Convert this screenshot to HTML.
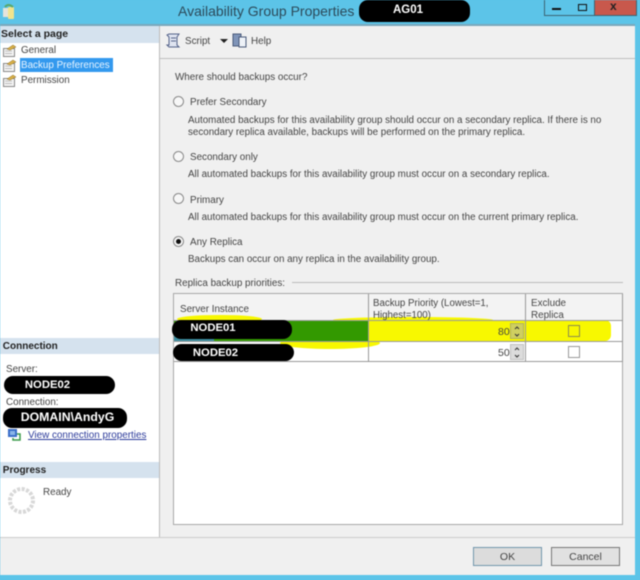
<!DOCTYPE html>
<html><head><meta charset="utf-8"><style>
html,body{margin:0;padding:0;background:#5cc4e8}
#p{position:relative;width:640px;height:580px;overflow:hidden;background:#5cc4e8;font-family:"Liberation Sans",sans-serif;font-size:9.85px;color:#444;filter:blur(.4px)}
#p div{position:absolute;white-space:nowrap}
.t{line-height:12px;margin-top:1px}
.d{font-size:9.8px}
.h{background:#d5e2ee;font-weight:bold;color:#222;left:0;width:159px;height:16px;line-height:16px;font-size:10px}
.bl{background:#000;color:#fff;font-weight:bold;text-align:center;border-radius:9px}
.r{width:11px;height:11px;border:1px solid #8a8a8a;border-radius:50%;background:#f7f7f7;left:173px;box-sizing:border-box}
</style></head><body><div id="p">
<div style="left:0;top:25px;width:635px;height:550px;background:#f0f0f0"></div>
<div style="left:0;top:24px;width:635px;height:2px;background:#7aa8bc"></div>
<!-- titlebar -->
<svg style="position:absolute;left:2px;top:3px" width="14" height="16" viewBox="0 0 14 16"><rect x="1" y="5" width="6" height="9" fill="#e4e4dc"/><rect x="6" y="4" width="6" height="12" rx="1" fill="#f2e48c"/><path d="M3 4q3-4 8 0" stroke="#5aa86a" stroke-width="2" fill="none"/></svg>
<div class="t" style="left:178px;top:2px;font-size:14px;line-height:17px;color:#2c4a5a">Availability Group Properties</div>
<div style="left:359px;top:0;width:111px;height:22px;background:#000;border-radius:9px"></div>
<div class="t" style="left:393px;top:3px;font-size:11.5px;font-weight:bold;color:#fff">AG01</div>
<div style="left:544px;top:0;width:27px;height:16px;background:#5cc4e8;border:1px solid #3b6474;border-top:0;box-sizing:border-box"></div>
<div style="left:570px;top:0;width:25px;height:16px;background:#5cc4e8;border:1px solid #3b6474;border-top:0;border-left:0;box-sizing:border-box"></div>
<div style="left:595px;top:0;width:42px;height:16px;background:#c8584c;border:1px solid #3b6474;border-top:0;border-left:0;box-sizing:border-box"></div>
<div style="left:552px;top:8px;width:9px;height:2px;background:#111"></div>
<div style="left:578px;top:4px;width:9px;height:7px;border:1.5px solid #111;box-sizing:border-box"></div>
<div style="left:610px;top:0;font-size:12px;line-height:13px;font-weight:bold;color:#222">x</div>
<!-- left panel -->
<div style="left:0;top:26px;width:159px;height:511px;background:#fff"></div>
<div style="left:159px;top:26px;width:1px;height:511px;background:#bbb"></div>
<div style="left:0;top:537px;width:635px;height:1px;background:#ccc"></div>
<div class="h" style="top:26px;height:17px;line-height:16px;font-size:10.5px;padding-left:1px;width:158px">Select a page</div>
<svg style="position:absolute;left:2px;top:43px" width="16" height="44" viewBox="0 0 16 44"><path d="M1.500 5.500h11v8h-11z" fill="#f4f4f4" stroke="#888"/><path d="M3 8h7M3 10.500h7" stroke="#bbb"/><path d="M5 6l6-4 3 2-6 3z" fill="#d8b048" stroke="#8a6a20" stroke-width=".5"/><path d="M1.500 20.500h11v8h-11z" fill="#f4f4f4" stroke="#888"/><path d="M3 23h7M3 25.500h7" stroke="#bbb"/><path d="M5 21l6-4 3 2-6 3z" fill="#d8b048" stroke="#8a6a20" stroke-width=".5"/><path d="M1.500 35.500h11v8h-11z" fill="#f4f4f4" stroke="#888"/><path d="M3 38h7M3 40.500h7" stroke="#bbb"/><path d="M5 36l6-4 3 2-6 3z" fill="#d8b048" stroke="#8a6a20" stroke-width=".5"/></svg>
<div class="t" style="left:21px;top:44px">General</div>
<div style="left:20px;top:58px;width:93px;height:14px;line-height:15px;background:#3399ee;color:#e8f4ff;padding-left:1px;box-sizing:border-box">Backup Preferences</div>
<div class="t" style="left:21px;top:74px">Permission</div>
<div class="h" style="top:338px;line-height:17px">&nbsp;Connection</div>
<div class="t" style="left:6px;top:363px">Server:</div>
<div class="bl" style="left:4px;top:376px;width:111px;height:18px;line-height:18px;font-size:11.3px;text-indent:-24px">NODE02</div>
<div class="t" style="left:6px;top:396px">Connection:</div>
<div class="bl" style="left:3px;top:408px;width:124px;height:20px;line-height:19px;font-size:12.3px;text-indent:5px">DOMAIN\AndyG</div>
<svg style="position:absolute;left:7px;top:428px" width="15" height="14" viewBox="0 0 15 14"><rect x="1" y="1" width="9" height="8" fill="#3a6ec8"/><rect x="3" y="3" width="5" height="4" fill="#8ab4e8"/><path d="M10 6h3v6H6v-2" fill="none" stroke="#3a9a4a" stroke-width="1.500"/></svg>
<div class="t" style="left:28px;top:429px;color:#2b3a9a;text-decoration:underline;font-size:9.9px">View connection properties</div>
<div class="h" style="top:462px;line-height:17px">&nbsp;Progress</div>
<svg style="position:absolute;left:7px;top:486px" width="29" height="29" viewBox="0 0 29 29"><circle cx="14.5" cy="14.5" r="11.5" fill="none" stroke="#d8d8d8" stroke-width="4" stroke-dasharray="3 1.5"/></svg>
<div class="t" style="left:43px;top:486px">Ready</div>
<!-- toolbar -->
<div style="left:160px;top:58px;width:475px;height:1px;background:#bfbfbf"></div>
<svg style="position:absolute;left:166px;top:32px" width="16" height="17" viewBox="0 0 16 17"><path d="M3 2h10l-2 3v8l2 2H3l-2-2h2V5L1 3z" fill="#dfe4f0" stroke="#55638a"/><path d="M5 6h5M5 9h5" stroke="#55638a"/></svg>
<div class="t" style="left:185px;top:35px">Script</div>
<div style="left:220px;top:39px;width:0;height:0;border:4px solid transparent;border-top:4px solid #222;border-bottom:0"></div>
<svg style="position:absolute;left:232px;top:33px" width="16" height="15" viewBox="0 0 16 15"><rect x="1" y="1" width="8" height="12" fill="#7f94b8" stroke="#4a5a7a"/><rect x="7" y="4" width="7" height="10" fill="#eef2f8" stroke="#4a5a7a"/></svg>
<div class="t" style="left:251px;top:35px">Help</div>
<!-- content -->
<div class="t" style="left:175px;top:71px">Where should backups occur?</div>
<div class="r" style="top:96px"></div>
<div class="t" style="left:190px;top:96px">Prefer Secondary</div>
<div class="t d" style="left:188px;top:114px">Automated backups for this availability group should occur on a secondary replica. If there is no</div>
<div class="t d" style="left:188px;top:126px">secondary replica available, backups will be performed on the primary replica.</div>
<div class="r" style="top:151px"></div>
<div class="t" style="left:190px;top:151px">Secondary only</div>
<div class="t d" style="left:188px;top:168px">All automated backups for this availability group must occur on a secondary replica.</div>
<div class="r" style="top:193px"></div>
<div class="t" style="left:190px;top:194px">Primary</div>
<div class="t d" style="left:188px;top:211px">All automated backups for this availability group must occur on the current primary replica.</div>
<div class="r" style="top:236px"></div>
<div style="left:176px;top:239px;width:5px;height:5px;border-radius:50%;background:#111"></div>
<div class="t" style="left:190px;top:236px">Any Replica</div>
<div class="t d" style="left:188px;top:253px">Backups can occur on any replica in the availability group.</div>
<div class="t" style="left:175px;top:277px">Replica backup priorities:</div>
<div style="left:292px;top:282px;width:331px;height:1px;background:#bbb"></div>
<!-- table -->
<div style="left:173px;top:293px;width:450px;height:232px;background:#fff;border:1px solid #a8a8a8;box-sizing:border-box"></div>
<div style="left:174px;top:294px;width:448px;height:27px;background:#f3f3f3"></div>
<div style="left:174px;top:361px;width:448px;height:1px;background:#999"></div>
<!-- yellow highlight -->
<div style="left:177px;top:315px;width:85px;height:8px;background:#f8f800;border-radius:50%"></div>
<div style="left:333px;top:317px;width:160px;height:6px;background:#f8f800;border-radius:50%"></div>
<div style="left:280px;top:337px;width:100px;height:12px;background:#f8f800;border-radius:50%"></div>
<div style="left:180px;top:320px;width:431px;height:21px;background:#f8f800;border-radius:0 6px 6px 0"></div>
<div style="left:174px;top:321px;width:194px;height:20px;background:#339900"></div>
<div style="left:174px;top:336px;width:40px;height:5px;background:#3d8ea0"></div>
<div style="left:174px;top:320px;width:448px;height:1px;background:#999"></div>
<div style="left:174px;top:341px;width:448px;height:1px;background:#999"></div>
<div style="left:368px;top:294px;width:1px;height:68px;background:#999"></div>
<div style="left:525px;top:294px;width:1px;height:68px;background:#999"></div>
<div style="left:622px;top:294px;width:1px;height:68px;background:#999"></div>
<div class="t" style="left:180px;top:303px">Server Instance</div>
<div class="t" style="left:373px;top:297px;font-size:9.7px">Backup Priority (Lowest=1,</div>
<div class="t" style="left:373px;top:309px;font-size:9.7px">Highest=100)</div>
<div class="t" style="left:531px;top:297px">Exclude</div>
<div class="t" style="left:531px;top:309px">Replica</div>
<div class="bl" style="left:172px;top:320px;width:120px;height:19px;line-height:16px;font-size:11.3px;text-indent:-38px">NODE01</div>
<div class="bl" style="left:173px;top:344px;width:121px;height:17px;line-height:19px;font-size:11.3px;text-indent:-36px">NODE02</div>
<div class="t" style="left:498px;top:325px;font-size:10.5px">80</div>
<div class="t" style="left:498px;top:346px;font-size:10.5px">50</div>
<div style="left:510px;top:323px;width:14px;height:16px;background:#cfcf60;border:1px solid #b0b060;box-sizing:border-box"></div>
<div style="left:510px;top:344px;width:14px;height:16px;background:#dcdcdc;border:1px solid #c0c0c0;box-sizing:border-box"></div>
<svg style="position:absolute;left:510px;top:323px" width="14" height="37" viewBox="0 0 14 37" fill="none" stroke="#333"><path d="M5 6l2-2 2 2M5 11l2 2 2-2M5 27l2-2 2 2M5 32l2 2 2-2"/></svg>
<div style="left:568px;top:325px;width:12px;height:12px;border:1px solid #8a8a50;box-sizing:border-box"></div>
<div style="left:568px;top:346px;width:12px;height:12px;border:1px solid #999;background:#fff;box-sizing:border-box"></div>
<!-- buttons -->
<div style="left:473px;top:547px;width:69px;height:19px;line-height:19px;background:#dcdcdc;border:1px solid #7096ac;box-sizing:border-box;text-align:center;font-size:10.5px">OK</div>
<div style="left:551px;top:547px;width:69px;height:19px;line-height:19px;background:#e1e1e1;border:1px solid #777;box-sizing:border-box;text-align:center;font-size:10.5px">Cancel</div>
</div></body></html>
